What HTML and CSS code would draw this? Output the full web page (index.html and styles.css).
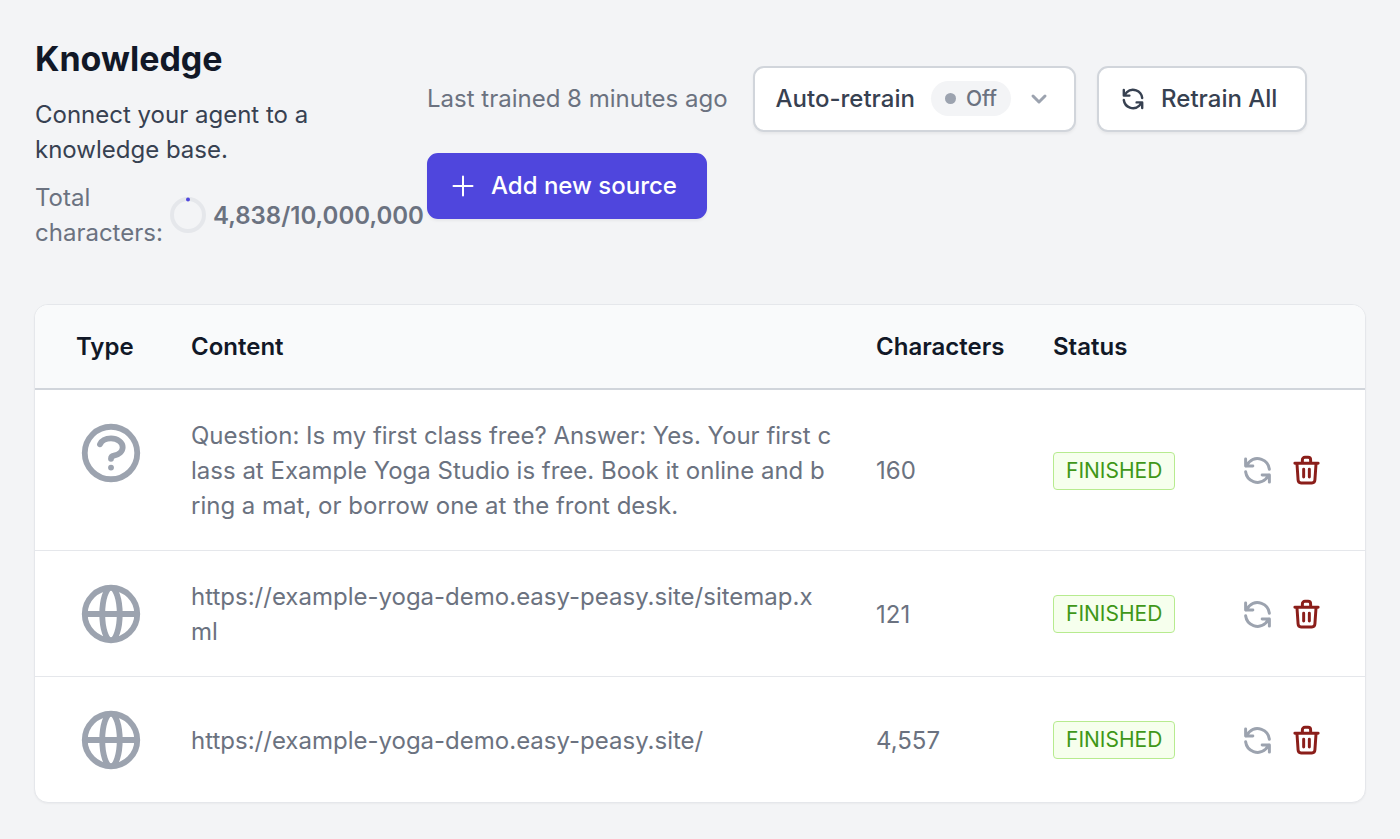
FILE: index.html
```html
<!DOCTYPE html>
<html lang="en">
<head>
<meta charset="utf-8">
<title>Knowledge</title>
<link rel="stylesheet" href="styles.css">
</head>
<body>
<svg class="sprite" aria-hidden="true">
  <symbol id="refresh" viewBox="0 0 24 24"><path d="M21.2 11A9.3 9.3 0 0 0 5.6 5.4L3 8.6M2.8 3v5.6h5.6M2.8 13a9.3 9.3 0 0 0 15.6 5.6l2.6-3.2M21.2 21v-5.6h-5.6"/></symbol>
  <symbol id="trash" viewBox="0 0 24 24"><path d="M3 6.4h18M4.6 6.4l.9 13a2.3 2.3 0 0 0 2.3 2.2h8.4a2.3 2.3 0 0 0 2.3-2.2l.9-13M8.8 6.2V3.8a2 2 0 0 1 2-2h2.4a2 2 0 0 1 2 2v2.4M9.8 11v6M14.2 11v6"/></symbol>
  <symbol id="globe" viewBox="0 0 24 24"><path d="M21 12a9 9 0 01-9 9m9-9a9 9 0 00-9-9m9 9H3m9 9a9 9 0 01-9-9m9 9c1.657 0 3-4.03 3-9s-1.343-9-3-9m0 18c-1.657 0-3-4.03-3-9s1.343-9 3-9m-9 9a9 9 0 019-9"/></symbol>
  <symbol id="question" viewBox="0 0 24 24"><path d="M8.228 9c.549-1.165 2.03-2 3.772-2 2.21 0 4 1.343 4 3 0 1.4-1.278 2.575-3.006 2.907-.542.104-.994.54-.994 1.093m0 3h.01M21 12a9 9 0 11-18 0 9 9 0 0118 0z"/></symbol>
</svg>
<main class="page">
  <header class="header">
    <div class="intro">
      <h1 class="title">Knowledge</h1>
      <p class="lead">Connect your agent to a knowledge base.</p>
      <div class="usage">
        <span>Total characters:</span>
        <svg class="ring" viewBox="0 0 36 36" aria-hidden="true"><circle class="ring-track" cx="18" cy="18" r="16"/><circle class="ring-dot" cx="18" cy="2.5" r="2"/></svg>
        <strong class="count">4,838/10,000,000</strong>
      </div>
    </div>
    <div class="actions">
      <span class="trained">Last trained 8 minutes ago</span>
      <button class="button" type="button">Auto-retrain
        <span class="pill"><span class="dot"></span>Off</span>
        <svg class="icon chevron" viewBox="0 0 28 28" aria-hidden="true"><path d="M8 11l6 6 6-6"/></svg>
      </button>
      <button class="button retrain" type="button"><svg class="icon small" aria-hidden="true"><use href="#refresh"/></svg>Retrain All</button>
      <button class="button primary" type="button"><svg class="icon small plus" viewBox="0 0 24 24" aria-hidden="true"><path d="M12 2.5v19M2.5 12h19"/></svg>Add new source</button>
    </div>
  </header>
  <div class="card">
    <table class="sources">
      <thead>
        <tr><th class="type">Type</th><th>Content</th><th class="chars">Characters</th><th class="status">Status</th><th class="tools" aria-label="Actions"></th></tr>
      </thead>
      <tbody>
        <tr>
          <td class="type"><svg class="icon large" role="img" aria-label="Question"><use href="#question"/></svg></td>
          <td class="content">Question: Is my first class free? Answer: Yes. Your first class at Example Yoga Studio is free. Book it online and bring a mat, or borrow one at the front desk.</td>
          <td>160</td>
          <td><span class="tag">FINISHED</span></td>
          <td><div class="row-tools"><button class="tool" type="button" aria-label="Retrain"><svg class="icon"><use href="#refresh"/></svg></button><button class="tool danger" type="button" aria-label="Delete"><svg class="icon"><use href="#trash"/></svg></button></div></td>
        </tr>
        <tr>
          <td class="type"><svg class="icon large" role="img" aria-label="Website"><use href="#globe"/></svg></td>
          <td class="content">https://example-yoga-demo.easy-peasy.site/sitemap.xml</td>
          <td>121</td>
          <td><span class="tag">FINISHED</span></td>
          <td><div class="row-tools"><button class="tool" type="button" aria-label="Retrain"><svg class="icon"><use href="#refresh"/></svg></button><button class="tool danger" type="button" aria-label="Delete"><svg class="icon"><use href="#trash"/></svg></button></div></td>
        </tr>
        <tr>
          <td class="type"><svg class="icon large" role="img" aria-label="Website"><use href="#globe"/></svg></td>
          <td class="content">https://example-yoga-demo.easy-peasy.site/</td>
          <td>4,557</td>
          <td><span class="tag">FINISHED</span></td>
          <td><div class="row-tools"><button class="tool" type="button" aria-label="Retrain"><svg class="icon"><use href="#refresh"/></svg></button><button class="tool danger" type="button" aria-label="Delete"><svg class="icon"><use href="#trash"/></svg></button></div></td>
        </tr>
      </tbody>
    </table>
  </div>
</main>
</body>
</html>
```
FILE: styles.css
```css
* { box-sizing: border-box; }
body {
  margin: 0;
  background: #f3f4f6;
  color: #6b7280;
  font-family: Inter, "Liberation Sans", sans-serif;
  font-size: 24px;
  line-height: 35px;
  font-optical-sizing: none;
}
.sprite { position: absolute; width: 0; height: 0; }
.page { padding: 35px 34px; }
.header { display: flex; margin-bottom: 54px; }
.intro { flex: 0 0 393px; padding-left: 1px; }
.title { margin: 0; color: #111827; font-size: 34px; font-weight: 700; line-height: 48px; }
.lead { margin: 14px 48px 13px 0; color: #374151; }
.usage { display: flex; align-items: center; gap: 7px; }
.usage span { width: 128px; }
.count { font-weight: 600; }
.ring { flex: none; width: 36px; height: 36px; fill: none; }
.ring-track { stroke: #e5e7eb; stroke-width: 4; }
.ring-dot { fill: #4f46dd; }
.actions {
  display: flex;
  flex: 1;
  flex-wrap: wrap;
  align-items: center;
  align-content: flex-start;
  gap: 21px;
  padding: 31px 50px 0 0;
}
.trained { padding: 0 4px 2px 0; }
.button {
  display: flex;
  align-items: center;
  height: 66px;
  padding: 0 21px 1px;
  border: 2px solid #d1d5db;
  border-radius: 11px;
  background: #fff;
  box-shadow: 0 2px 3px rgb(0 0 0 / 5%);
  color: #374151;
  font: inherit;
  font-weight: 500;
  cursor: pointer;
}
.retrain, .primary { gap: 16px; padding: 0 28px 1px 22px; }
.primary { border-color: #4f46dd; background: #4f46dd; color: #fff; }
.pill {
  display: flex;
  align-items: center;
  gap: 10px;
  height: 35px;
  margin: 0 14px 0 16px;
  padding: 0 14px;
  border-radius: 18px;
  background: #f3f4f6;
  color: #6b7280;
  font-size: 21px;
}
.dot { width: 11px; height: 11px; border-radius: 50%; background: #9ca3af; }
.icon {
  display: block;
  flex: none;
  width: 31px;
  height: 31px;
  fill: none;
  stroke: currentColor;
  stroke-width: 2;
  stroke-linecap: round;
  stroke-linejoin: round;
}
.small { width: 24px; height: 24px; stroke-width: 2.4; }
.plus { stroke-width: 2; }
.large { width: 70px; height: 70px; color: #9ca3af; }
.chevron { width: 28px; height: 28px; color: #9ca3af; stroke-width: 3; }
.card { overflow: hidden; border: 1px solid #e5e7eb; border-radius: 14px; background: #fff; box-shadow: 0 1px 2px rgb(0 0 0 / 4%); }
.sources { width: 100%; border-collapse: collapse; table-layout: fixed; text-align: left; }
th { height: 84px; padding: 0 21px; border-bottom: 2px solid #d1d5db; background: #f9fafb; color: #111827; font-weight: 600; }
td { padding: 28px 21px 27px; }
tbody tr + tr { border-top: 1px solid #e5e7eb; }
th.type, td.type { width: 135px; padding-left: 41px; padding-right: 0; }
td.type { vertical-align: top; }
.content { padding-right: 22px; word-break: break-all; }
.chars { width: 177px; }
.status { width: 189px; }
.tools { width: 144px; }
.tag { display: inline-block; padding: 0 12px; border: 1px solid #b7eb8f; border-radius: 4px; background: #f6ffed; color: #3f9718; font-size: 21px; line-height: 36px; vertical-align: middle; }
.row-tools { display: flex; gap: 18px; }
.tool { padding: 0; border: 0; background: none; color: #9ca3af; cursor: pointer; }
.tool .icon { stroke-width: 2.3; }
.danger { color: #8b1e1a; }
```
